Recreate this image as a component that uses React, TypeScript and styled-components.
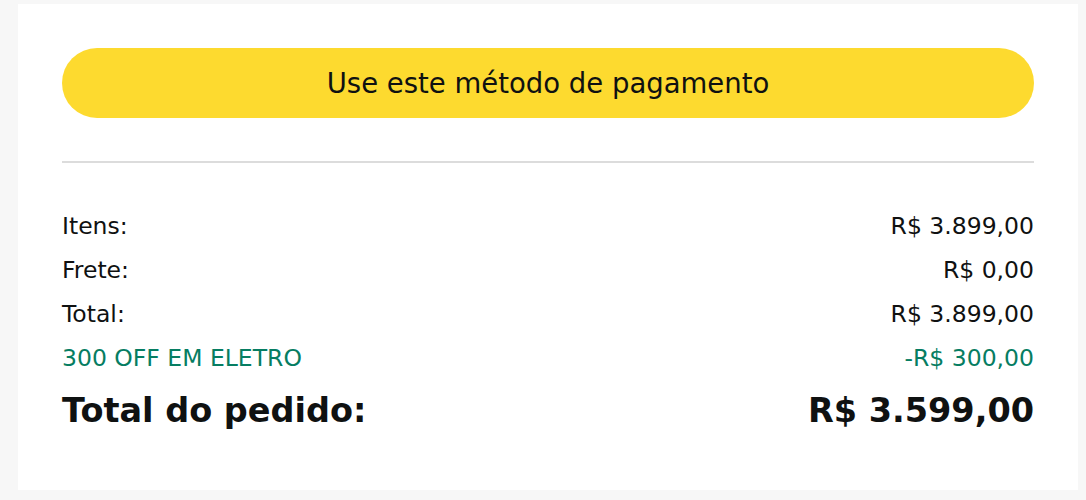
import React from 'react';
import styled, { createGlobalStyle } from 'styled-components';

const GlobalStyle = createGlobalStyle`
  html, body {
    margin: 0;
    padding: 0;
    background: #f7f7f7;
  }
  body {
    font-family: "DejaVu Sans", "Noto Sans", Arial, sans-serif;
    color: #0f1111;
  }
`;

const Page = styled.div`
  padding: 4px 8px 10px 18px;
`;

const Card = styled.section`
  background: #ffffff;
  width: 1060px;
  height: 486px;
  box-sizing: border-box;
  padding: 44px 44px 0 44px;
`;

const PayButton = styled.button`
  display: flex;
  align-items: center;
  justify-content: center;
  width: 100%;
  height: 70px;
  border: none;
  border-radius: 35px;
  background: #fdda2f;
  font-family: inherit;
  font-size: 27.5px;
  color: #0f1111;
  cursor: pointer;
  padding: 0;
`;

const Divider = styled.hr`
  border: none;
  height: 2px;
  background: #dcdcdc;
  margin: 43px 0 41px 0;
`;

const Summary = styled.div`
  display: flex;
  flex-direction: column;
`;

const Row = styled.div<{ $tone?: 'default' | 'promo' }>`
  display: flex;
  justify-content: space-between;
  align-items: center;
  height: 44px;
  font-size: 23.5px;
  color: ${(p) => (p.$tone === 'promo' ? '#067d62' : '#0f1111')};
`;

const TotalRow = styled.div`
  display: flex;
  justify-content: space-between;
  align-items: center;
  height: 60px;
  font-size: 33.5px;
  font-weight: 700;
`;

const lines = [
  { label: 'Itens:', value: 'R$ 3.899,00' },
  { label: 'Frete:', value: 'R$ 0,00' },
  { label: 'Total:', value: 'R$ 3.899,00' },
  { label: '300 OFF EM ELETRO', value: '-R$ 300,00', promo: true },
];

export default function App() {
  return (
    <>
      <GlobalStyle />
      <Page>
        <Card>
          <PayButton>Use este método de pagamento</PayButton>
          <Divider />
          <Summary>
            {lines.map((l) => (
              <Row key={l.label} $tone={l.promo ? 'promo' : 'default'}>
                <span>{l.label}</span>
                <span>{l.value}</span>
              </Row>
            ))}
            <TotalRow>
              <span>Total do pedido:</span>
              <span>R$ 3.599,00</span>
            </TotalRow>
          </Summary>
        </Card>
      </Page>
    </>
  );
}
